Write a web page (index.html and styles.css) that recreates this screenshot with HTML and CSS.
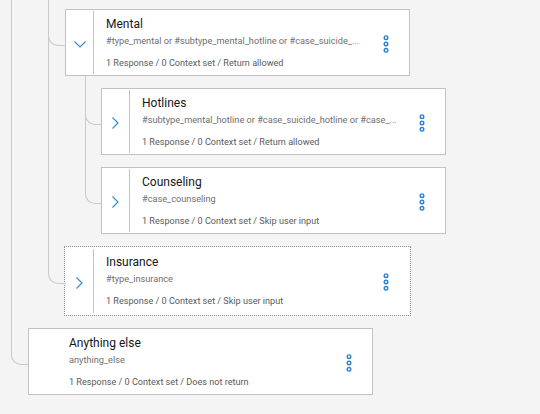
FILE: index.html
```html
<!DOCTYPE html>
<html>
<head>
<meta charset="utf-8">
<title>Dialog tree</title>
<link rel="stylesheet" href="styles.css">
</head>
<body>
<div class="tree">
  <ul class="level level-a">
    <li class="node node-hidden">
      <ul class="level level-b">
        <li class="node">
          <div class="card">
            <div class="card-toggle">
              <svg class="chev-down" width="12" height="7" viewBox="0 0 12 7"><polyline points="0.5,0.5 6,6 11.5,0.5"/></svg>
            </div>
            <div class="card-body">
              <div class="title">Mental</div>
              <div class="condition">#type_mental or #subtype_mental_hotline or #case_suicide_...</div>
              <div class="meta">1 Response / 0 Context set / Return allowed</div>
            </div>
            <div class="card-menu">
              <svg width="8" height="20" viewBox="0 0 8 20"><circle cx="4" cy="3.7" r="1.8"/><circle cx="4" cy="10" r="1.8"/><circle cx="4" cy="16.3" r="1.8"/></svg>
            </div>
          </div>
          <ul class="level level-c">
            <li class="node">
              <div class="card">
                <div class="card-toggle">
                  <svg class="chev-right" width="7" height="12" viewBox="0 0 7 12"><polyline points="0.5,0.5 6,6 0.5,11.5"/></svg>
                </div>
                <div class="card-body">
                  <div class="title">Hotlines</div>
                  <div class="condition">#subtype_mental_hotline or #case_suicide_hotline or #case_...</div>
                  <div class="meta">1 Response / 0 Context set / Return allowed</div>
                </div>
                <div class="card-menu">
                  <svg width="8" height="20" viewBox="0 0 8 20"><circle cx="4" cy="3.7" r="1.8"/><circle cx="4" cy="10" r="1.8"/><circle cx="4" cy="16.3" r="1.8"/></svg>
                </div>
              </div>
            </li>
            <li class="node">
              <div class="card">
                <div class="card-toggle">
                  <svg class="chev-right" width="7" height="12" viewBox="0 0 7 12"><polyline points="0.5,0.5 6,6 0.5,11.5"/></svg>
                </div>
                <div class="card-body">
                  <div class="title">Counseling</div>
                  <div class="condition">#case_counseling</div>
                  <div class="meta">1 Response / 0 Context set / Skip user input</div>
                </div>
                <div class="card-menu">
                  <svg width="8" height="20" viewBox="0 0 8 20"><circle cx="4" cy="3.7" r="1.8"/><circle cx="4" cy="10" r="1.8"/><circle cx="4" cy="16.3" r="1.8"/></svg>
                </div>
              </div>
            </li>
          </ul>
        </li>
        <li class="node node-focused">
          <div class="card is-focused">
            <div class="card-toggle">
              <svg class="chev-right" width="7" height="12" viewBox="0 0 7 12"><polyline points="0.5,0.5 6,6 0.5,11.5"/></svg>
            </div>
            <div class="card-body">
              <div class="title">Insurance</div>
              <div class="condition">#type_insurance</div>
              <div class="meta">1 Response / 0 Context set / Skip user input</div>
            </div>
            <div class="card-menu">
              <svg width="8" height="20" viewBox="0 0 8 20"><circle cx="4" cy="3.7" r="1.8"/><circle cx="4" cy="10" r="1.8"/><circle cx="4" cy="16.3" r="1.8"/></svg>
            </div>
          </div>
        </li>
      </ul>
    </li>
    <li class="node node-last-root">
      <div class="card">
        <div class="card-toggle is-empty"></div>
        <div class="card-body">
          <div class="title">Anything else</div>
          <div class="condition">anything_else</div>
          <div class="meta">1 Response / 0 Context set / Does not return</div>
        </div>
        <div class="card-menu">
          <svg width="8" height="20" viewBox="0 0 8 20"><circle cx="4" cy="3.7" r="1.8"/><circle cx="4" cy="10" r="1.8"/><circle cx="4" cy="16.3" r="1.8"/></svg>
        </div>
      </div>
    </li>
  </ul>
</div>
</body>
</html>
```
FILE: styles.css
```css
* { box-sizing: border-box; }
html, body { margin: 0; padding: 0; }
body {
  width: 540px;
  height: 414px;
  overflow: hidden;
  background: #f4f4f4;
  font-family: Roboto, "Liberation Sans", Arial, sans-serif;
}
.tree { margin-top: -3px; }
.level { list-style: none; margin: 0; padding: 0; }
.level-a { padding-left: 28px; }
.level-b { padding-left: 37px; }
.level-c { padding-left: 36px; }

.node { position: relative; padding-top: 12px; }
.node-hidden { padding-top: 0; }
.node-focused { padding-top: 13px; }
.node-last-root { padding-top: 13px; }

.node::before {
  content: "";
  position: absolute;
  left: -17px;
  top: 0;
  width: 17px;
  height: 48px;
  border-left: 1px solid #c9c9c9;
  border-bottom: 1px solid #c9c9c9;
  border-bottom-left-radius: 10px;
}
.node-focused::before,
.node-last-root::before { height: 49px; }
.node:not(:last-child)::after {
  content: "";
  position: absolute;
  left: -17px;
  top: 0;
  bottom: 0;
  border-left: 1px solid #c9c9c9;
}
.node-hidden::before { display: none; }
.level-c > .node::before,
.level-c > .node::after { left: -16px; }
.level-c > .node::before { width: 16px; }

.card {
  display: flex;
  width: 345px;
  height: 67px;
  background: #fff;
  border: 1px solid #c2c2c2;
}
.card.is-focused {
  height: 68px;
  border-color: #fff;
  outline: 1px dotted #8f8f8f;
  outline-offset: 0;
}
.card-toggle {
  flex: 0 0 28px;
  margin: 1px 0;
  padding-top: 3px;
  display: flex;
  align-items: center;
  justify-content: center;
  border-right: 1px solid #c2c2c2;
}
.card-toggle.is-empty { border-right-color: transparent; }
.card-toggle svg { display: block; fill: none; stroke: #2f86d6; stroke-width: 1.1; }
.card-body {
  flex: 1;
  min-width: 0;
  padding: 6px 0 0 12px;
}
.title {
  font-size: 12px;
  line-height: 17px;
  color: #161616;
  white-space: nowrap;
}
.condition {
  margin-top: 2px;
  font-size: 9.2px;
  line-height: 12px;
  color: #6f6f6f;
  white-space: nowrap;
}
.meta {
  margin-top: 10px;
  font-size: 9.1px;
  line-height: 12px;
  color: #5a5a5a;
  white-space: nowrap;
}
.card-menu {
  flex: 0 0 auto;
  display: flex;
  align-items: center;
  padding: 2px 19px 0 0;
}
.card-menu svg { display: block; fill: none; stroke: #2a80d3; stroke-width: 1.4; }
```
